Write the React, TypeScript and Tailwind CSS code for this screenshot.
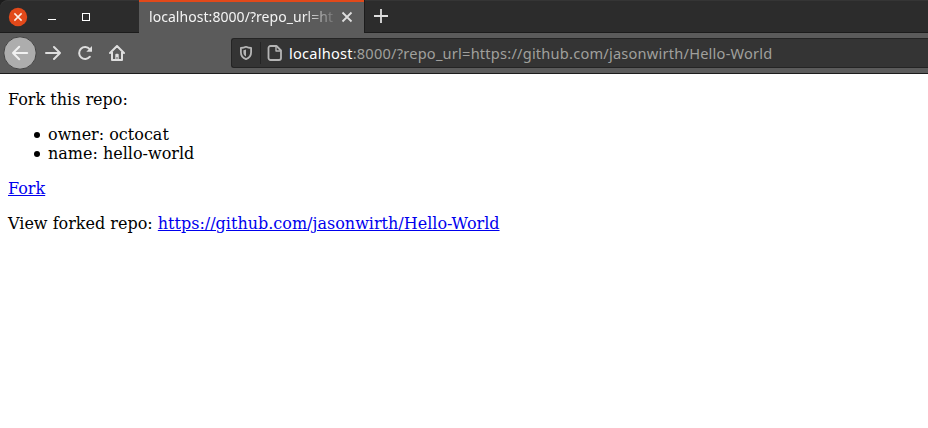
function CloseWindowIcon() {
  return (
    <svg className="size-[20px]" viewBox="0 0 20 20" fill="none">
      <circle cx="10" cy="10" r="9.2" fill="#e2491a" />
      <path d="M6.4 6.4l7.2 7.2M13.6 6.4l-7.2 7.2" stroke="#fbefe9" strokeWidth="1.5" />
    </svg>
  );
}

function WindowControls() {
  return (
    <div className="flex h-[33px] w-[139px] shrink-0 border-b border-[#1c1c1c] pl-2">
      <button aria-label="Close window" className="mt-[7px] size-[20px]"><CloseWindowIcon /></button>
      <button aria-label="Minimize" className="mt-[19px] ml-5 h-px w-2 bg-white" />
      <button aria-label="Maximize" className="mt-[13px] ml-[26px] size-2 border border-white" />
    </div>
  );
}

function Tab() {
  return (
    <div className="flex h-[33px] w-[225px] shrink-0 border-t-2 border-[#e2491a] bg-[#5b5b5b] pl-[10px]">
      <div className="mt-[4px] h-[22px] w-[188px] whitespace-nowrap [mask-image:linear-gradient(to_right,black_154px,transparent_190px)] font-['Noto_Sans',sans-serif] text-[14px] leading-[22px] tracking-[0.05px] text-[#f4f4f4]">
        localhost:8000/?repo_url=ht
      </div>
      <svg className="mt-[9px] ml-[4px] size-3" viewBox="0 0 12 12" fill="none" stroke="#dedede" strokeWidth="1.8">
        <path d="M1.5 1.5l9 9M10.5 1.5l-9 9" />
      </svg>
    </div>
  );
}

function TitleBar() {
  return (
    <div className="flex h-[33px] rounded-tl-lg bg-[#2c2c2c] shadow-[inset_0_1px_0_#353535]">
      <WindowControls />
      <Tab />
      <div className="h-[33px] flex-1 border-b border-l border-[#1c1c1c] pt-[8px] pl-[8px]">
        <svg className="size-4" viewBox="0 0 16 16" stroke="#dedede" strokeWidth="1.8">
          <path d="M8 1v14M1 8h14" />
        </svg>
      </div>
    </div>
  );
}

function NavButtons() {
  return (
    <div className="flex h-10 w-[231px] shrink-0">
      <svg className="mt-[3px] ml-[3px] size-[34px]" viewBox="0 0 34 34" fill="none">
        <circle cx="17" cy="17" r="16.2" fill="#adadad" stroke="#434343" />
        <path d="M24.2 17H10M16.2 10.8L10 17l6.2 6.2" stroke="#f1f1f1" strokeWidth="2" strokeLinecap="round" strokeLinejoin="round" />
      </svg>
      <svg className="mt-3 ml-2 size-4" viewBox="0 0 16 16" fill="none" stroke="#dedede" strokeWidth="2" strokeLinecap="round" strokeLinejoin="round">
        <path d="M1 8h14M9 2l6 6-6 6" />
      </svg>
      <svg className="mt-3 ml-4 size-4" viewBox="0 0 16 16" fill="none" stroke="#dedede" strokeWidth="2" strokeLinecap="round">
        <path d="M12.9 11.7A6 6 0 1 1 12.7 4.1" />
        <path d="M15 1v5.7H9.3z" fill="#dedede" stroke="none" />
      </svg>
      <svg className="mt-3 ml-4 size-4" viewBox="0 0 16 16" fill="none" stroke="#dedede" strokeWidth="2" strokeLinecap="round" strokeLinejoin="round">
        <path d="M1 8l7-7 7 7M3 7v8h10V7" />
        <path d="M6.3 14V9.8a1 1 0 0 1 1-1h1.4a1 1 0 0 1 1 1V14H8.5v-2h-1v2z" fill="#dedede" stroke="none" />
      </svg>
    </div>
  );
}

function AddressBar() {
  return (
    <div className="mt-[5px] flex h-[30px] flex-1 items-center rounded-l-[3px] border border-r-0 border-[#242424] bg-[#343434]">
      <svg className="ml-[6px] size-4" viewBox="0 0 16 16" fill="none">
        <path d="M8 1.8C6.2 2.7 4.2 3 2.9 3v4.2c0 3.5 2 5.8 5.1 7 3.1-1.2 5.1-3.5 5.1-7V3C11.8 3 9.8 2.7 8 1.8z" stroke="#b5b5b5" strokeWidth="1.8" strokeLinejoin="round" />
        <path d="M8 4.5v7C6.2 10.5 5.4 9.3 5.4 7.2V5.2C6.3 5.1 7.2 4.9 8 4.5z" fill="#b5b5b5" />
      </svg>
      <div className="ml-[6px] h-[22px] w-px bg-[#242424]" />
      <svg className="ml-[6px] size-4" viewBox="0 0 16 16" fill="none" stroke="#b5b5b5" strokeWidth="1.8" strokeLinejoin="round">
        <path d="M3.5 1H9.5L14 5.5V13a2 2 0 0 1-2 2H3.5a2 2 0 0 1-2-2V3a2 2 0 0 1 2-2z" />
        <path d="M9 1v5h5" strokeWidth="1.4" />
      </svg>
      <div className="ml-[6px] flex font-['Noto_Sans',sans-serif] text-[14.6px] leading-5 tracking-[0.22px] whitespace-nowrap">
        <span className="text-white">localhost</span>
        <span className="text-[#a0a09d]">:8000/?repo_url=https://github.com/jasonwirth/Hello-World</span>
      </div>
    </div>
  );
}

function Item({ children }: { children: string }) {
  return (
    <li className="flex items-center">
      <span className="mt-px mr-[8px] size-[6px] rounded-full bg-black" />
      {children}
    </li>
  );
}

export default function App() {
  return (
    <div className="h-[428px] w-[928px] overflow-hidden bg-white">
      <header className="bg-[#1c1c1c]">
        <TitleBar />
        <div className="flex h-[41px] border-b border-[#1c1c1c] bg-[#5b5b5b]">
          <NavButtons />
          <AddressBar />
        </div>
      </header>
      <main className="flex flex-col gap-4 px-2 pt-4 font-['DejaVu_Serif',serif] text-[16px] leading-[19px] text-black">
        <p>Fork this repo:</p>
        <ul className="pl-[26px]">
          <Item>owner: octocat</Item>
          <Item>name: hello-world</Item>
        </ul>
        <p><a href="#" className="text-[#0000ee] underline">Fork</a></p>
        <p>View forked repo: <a href="#" className="text-[#0000ee] underline">https://github.com/jasonwirth/Hello-World</a></p>
      </main>
    </div>
  );
}
